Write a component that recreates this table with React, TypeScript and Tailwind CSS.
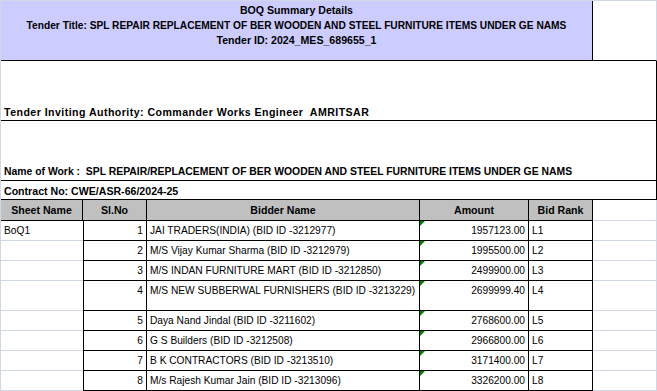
import React from 'react';

type Bid = { no: number; name: string; amount: string; rank: string; tall?: boolean };

const bids: Bid[] = [
  { no: 1, name: 'JAI TRADERS(INDIA) (BID ID -3212977)', amount: '1957123.00', rank: 'L1' },
  { no: 2, name: 'M/S Vijay Kumar Sharma (BID ID -3212979)', amount: '1995500.00', rank: 'L2' },
  { no: 3, name: 'M/S INDAN FURNITURE MART (BID ID -3212850)', amount: '2499900.00', rank: 'L3' },
  { no: 4, name: 'M/S NEW SUBBERWAL FURNISHERS (BID ID -3213229)', amount: '2699999.40', rank: 'L4', tall: true },
  { no: 5, name: 'Daya Nand Jindal (BID ID -3211602)', amount: '2768600.00', rank: 'L5' },
  { no: 6, name: 'G S Builders (BID ID -3212508)', amount: '2966800.00', rank: 'L6' },
  { no: 7, name: 'B K CONTRACTORS (BID ID -3213510)', amount: '3171400.00', rank: 'L7' },
  { no: 8, name: 'M/s Rajesh Kumar Jain (BID ID -3213096)', amount: '3326200.00', rank: 'L8' },
];

const cell = 'border-r border-b border-black px-[3px] pt-[3px] leading-[14px]';
const grid = 'border-r border-b border-[#d0d7e5] px-[3px] pt-[3px] leading-[14px]';
const head = `${cell} h-[21px] bg-[#c0c0c0] font-bold text-center text-[10.6px]`;

export default function App() {
  return (
    <div className="w-[657px] h-[391px] bg-white overflow-hidden font-['Liberation_Sans',Arial,sans-serif] text-[10.2px] text-black">
      <div className="grid grid-cols-[82px_64px_273px_109px_64px_64px] border-t border-l border-[#d0d7e5]">
        {/* Title block */}
        <div className="col-span-5 h-[60px] bg-[#ccccff] border-r border-b border-black pt-[2px] leading-[15px] font-bold text-center">
          <div className="text-[10.6px]">BOQ Summary Details</div>
          <div>Tender Title: SPL REPAIR REPLACEMENT OF BER WOODEN AND STEEL FURNITURE ITEMS UNDER GE NAMS</div>
          <div className="text-[10.6px]">Tender ID: 2024_MES_689655_1</div>
        </div>
        <div className="h-[60px] border-r border-b border-b-black border-r-[#d0d7e5]" />

        {/* Authority / work / contract */}
        <div className="col-span-6 h-[60px] border-r border-b border-black flex items-end px-[3px] pb-[1px] leading-[14px] font-bold text-[10.6px] tracking-[0.45px] whitespace-pre">
          Tender Inviting Authority: Commander Works Engineer  AMRITSAR
        </div>
        <div className="col-span-6 h-[60px] border-r border-b border-black flex items-end px-[3px] pb-[1px] leading-[14px] font-bold text-[10.4px] whitespace-pre">
          Name of Work :  SPL REPAIR/REPLACEMENT OF BER WOODEN AND STEEL FURNITURE ITEMS UNDER GE NAMS
        </div>
        <div className="col-span-6 h-[19px] border-r border-b border-black flex items-end px-[3px] pb-[1px] leading-[14px] font-bold text-[10.6px]">
          Contract No: CWE/ASR-66/2024-25
        </div>

        {/* Column headings */}
        <div className={head}>Sheet Name</div>
        <div className={head}>Sl.No</div>
        <div className={head}>Bidder Name</div>
        <div className={head}>Amount</div>
        <div className={head}>Bid Rank</div>
        <div className={`${grid} h-[21px]`} />

        {/* Bids */}
        {bids.map((b) => {
          const h = b.tall ? 'h-[30px]' : 'h-[20px]';
          return (
            <React.Fragment key={b.no}>
              <div className={`${h} border-b border-[#d0d7e5] px-[3px] pt-[3px] leading-[14px]`}>{b.no === 1 ? 'BoQ1' : ''}</div>
              <div className={`${cell} ${h} border-l text-right`}>{b.no}</div>
              <div className={`${cell} ${h} whitespace-nowrap`}>{b.name}</div>
              <div className={`${cell} ${h} relative text-right`}>
                <span className="absolute left-0 top-0 w-0 h-0 border-t-[5px] border-r-[5px] border-t-[#008000] border-r-transparent" />
                {b.amount}
              </div>
              <div className={`${cell} ${h}`}>{b.rank}</div>
              <div className={`${grid} ${h}`} />
            </React.Fragment>
          );
        })}
      </div>
    </div>
  );
}
